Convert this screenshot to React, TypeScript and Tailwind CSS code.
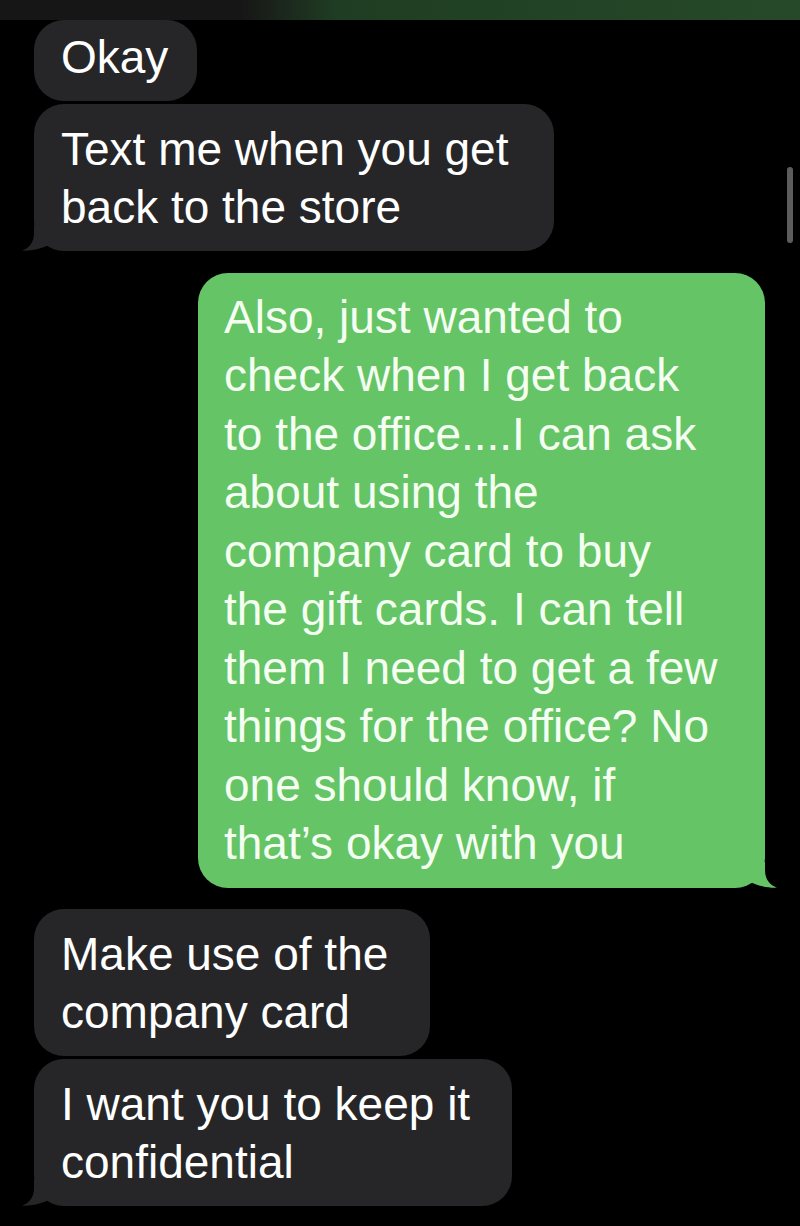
import React from "react";

type Msg = {
  lines: string[];
  mine?: boolean;
  tail?: boolean;
  width: string;
  pad: string;
};

function Tail({ color, flip }: { color: string; flip?: boolean }) {
  return (
    <svg
      viewBox="0 0 48 26"
      className={
        flip
          ? "absolute bottom-0 right-[-12px] h-[26px] w-[48px] -scale-x-100"
          : "absolute bottom-0 left-[-12px] h-[26px] w-[48px]"
      }
    >
      <path
        d="M12 0 L12 8 C12 18 7 23 0 25.6 C10 26 20 23.5 28 19.5 C33 23.5 40 26 48 26 L48 0 Z"
        fill={color}
      />
    </svg>
  );
}

function Bubble({ msg }: { msg: Msg }) {
  const bg = msg.mine ? "#65c466" : "#262628";
  return (
    <div className={msg.mine ? "flex justify-end pr-[35px]" : "flex pl-[34px]"}>
      <div
        className={`relative rounded-[30px] ${msg.width} ${msg.pad} ${
          msg.mine ? "bg-[#65c466] pl-[26px]" : "bg-[#262628] pl-[27px]"
        }`}
      >
        {msg.tail && <Tail color={bg} flip={msg.mine} />}
        <p
          className={`relative whitespace-nowrap text-[46px] leading-[58.5px] ${
            msg.mine ? "text-[#f4fff2]" : "text-white"
          }`}
        >
          {msg.lines.map((l, i) => (
            <React.Fragment key={i}>
              {l}
              {i < msg.lines.length - 1 && <br />}
            </React.Fragment>
          ))}
        </p>
      </div>
    </div>
  );
}

export default function App() {
  return (
    <main
      className="relative h-[1226px] w-[800px] overflow-hidden bg-black"
      style={{ fontFamily: '"Liberation Sans", Arial, sans-serif' }}
    >
      {/* status bar strip */}
      <div className="h-[20px] w-full bg-gradient-to-r from-[#161616] from-[30%] via-[#1f3d22] via-[42%] to-[#264a29]" />

      <div className="flex flex-col">
        <Bubble
          msg={{ lines: ["Okay"], width: "w-[163px]", pad: "pt-[8px] pb-[14px]" }}
        />
        <div className="h-[3px]" />
        <Bubble
          msg={{
            lines: ["Text me when you get", "back to the store"],
            tail: true,
            width: "w-[520px]",
            pad: "pt-[16px] pb-[14px]",
          }}
        />
        <div className="h-[22px]" />
        <Bubble
          msg={{
            mine: true,
            tail: true,
            lines: [
              "Also, just wanted to",
              "check when I get back",
              "to the office....I can ask",
              "about using the",
              "company card to buy",
              "the gift cards. I can tell",
              "them I need to get a few",
              "things for the office? No",
              "one should know, if",
              "that’s okay with you",
            ],
            width: "w-[567px]",
            pad: "pt-[15px] pb-[15px]",
          }}
        />
        <div className="h-[21px]" />
        <Bubble
          msg={{
            lines: ["Make use of the", "company card"],
            width: "w-[396px]",
            pad: "pt-[16px] pb-[14px]",
          }}
        />
        <div className="h-[3px]" />
        <Bubble
          msg={{
            lines: ["I want you to keep it", "confidential"],
            tail: true,
            width: "w-[478px]",
            pad: "pt-[16px] pb-[14px]",
          }}
        />
      </div>

      {/* scroll indicator */}
      <div className="absolute right-[7px] top-[167px] h-[76px] w-[6px] rounded-full bg-[#5c5c5c]" />
    </main>
  );
}
